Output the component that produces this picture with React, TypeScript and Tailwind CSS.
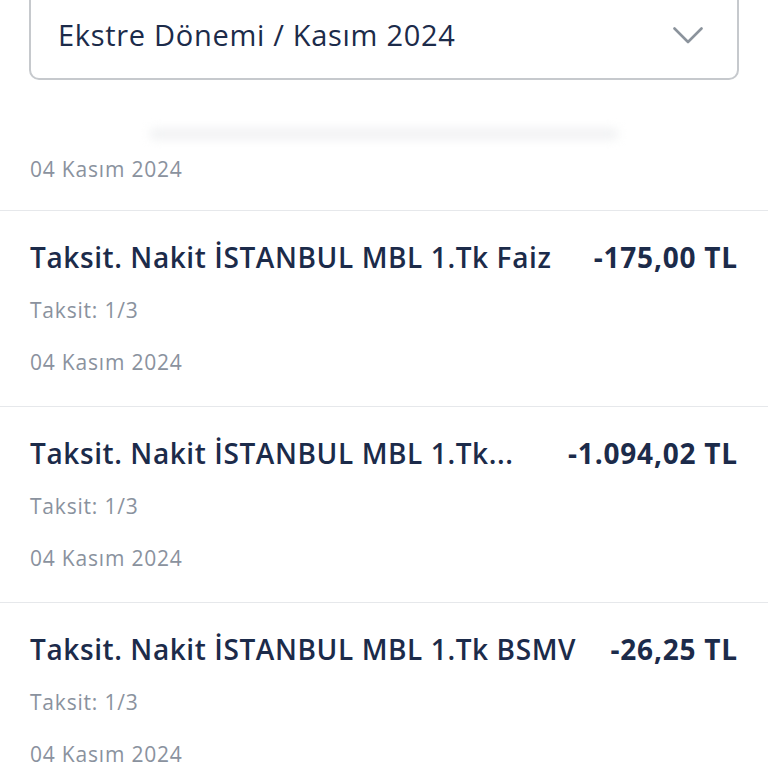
interface Txn {
  title: string;
  amount: string;
  installment: string;
  date: string;
}

const txns: Txn[] = [
  { title: 'Taksit. Nakit İSTANBUL MBL 1.Tk Faiz', amount: '-175,00 TL', installment: 'Taksit: 1/3', date: '04 Kasım 2024' },
  { title: 'Taksit. Nakit İSTANBUL MBL 1.Tk...', amount: '-1.094,02 TL', installment: 'Taksit: 1/3', date: '04 Kasım 2024' },
  { title: 'Taksit. Nakit İSTANBUL MBL 1.Tk BSMV', amount: '-26,25 TL', installment: 'Taksit: 1/3', date: '04 Kasım 2024' },
];

export default function App() {
  return (
    <div className="h-[768px] w-[768px] overflow-hidden bg-white font-['Open_Sans',sans-serif]">
      {/* Period selector */}
      <div className="px-[29px]">
        <div className="-mt-[14px] flex h-[94px] items-center justify-between rounded-[10px] border-[2.5px] border-[#c6c9cd] pl-[27px] pr-[34px] pt-[2px]">
          <span className="text-[29px] font-medium leading-none tracking-[0.7px] text-[#1c2b4a]">Ekstre Dönemi / Kasım 2024</span>
          <svg width="30" height="17" viewBox="0 0 30 17" fill="none" className="mt-[2px]">
            <polyline points="1.5,1.5 15,15 28.5,1.5" stroke="#8b939c" strokeWidth="2.6" strokeLinecap="round" strokeLinejoin="round" />
          </svg>
        </div>
      </div>

      {/* faint shadow */}
      <div className="mx-auto mt-[48px] h-[12px] w-[470px] rounded-full bg-[#f2f3f4] blur-[5px]" />

      <div className="px-[30px] pb-[30px] pt-[19px] text-[21px] font-medium leading-[21px] tracking-[0.8px] text-[#8a929e]">04 Kasım 2024</div>

      {txns.map((t, i) => (
        <div key={i} className="border-t border-[#e6e8eb] px-[30px] pb-[33px] pt-[32px]">
          <div className="flex items-center justify-between gap-6">
            <span className="whitespace-nowrap text-[28px] font-semibold leading-[28px] tracking-[0.6px] text-[#1c2b4a]">{t.title}</span>
            <span className="shrink-0 whitespace-nowrap text-[28px] font-bold leading-[28px] tracking-[0.8px] text-[#1c2b4a]">{t.amount}</span>
          </div>
          <div className="mt-[29px] text-[21px] font-medium leading-[21px] tracking-[0.8px] text-[#8a929e]">{t.installment}</div>
          <div className="mt-[31px] text-[21px] font-medium leading-[21px] tracking-[0.8px] text-[#8a929e]">{t.date}</div>
        </div>
      ))}
    </div>
  );
}
